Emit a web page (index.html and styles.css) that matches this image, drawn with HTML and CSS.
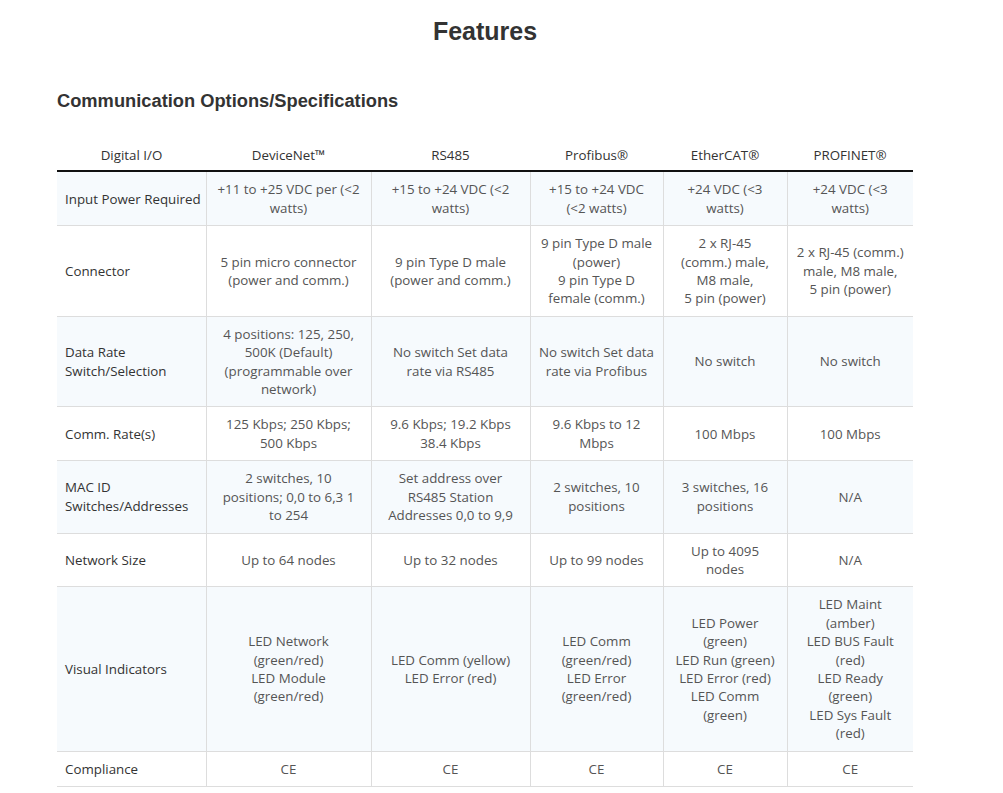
FILE: index.html
```html
<!DOCTYPE html>
<html>
<head>
<meta charset="utf-8">
<link rel="stylesheet" href="styles.css">
</head>
<body>
<div class="page">
  <h1 class="title">Features</h1>
  <h2 class="subtitle">Communication Options/Specifications</h2>
  <table class="spec">
    <colgroup>
      <col style="width:149px"><col style="width:165px"><col style="width:159px"><col style="width:133px"><col style="width:124px"><col style="width:126px">
    </colgroup>
    <thead>
      <tr><th>Digital I/O</th><th>DeviceNet™</th><th>RS485</th><th>Profibus®</th><th>EtherCAT®</th><th>PROFINET®</th></tr>
    </thead>
    <tbody>
      <tr class="alt"><td class="lbl">Input Power Required</td><td>+11 to +25 VDC per (&lt;2 watts)</td><td>+15 to +24 VDC (&lt;2 watts)</td><td>+15 to +24 VDC<br>(&lt;2 watts)</td><td>+24 VDC (&lt;3 watts)</td><td>+24 VDC (&lt;3 watts)</td></tr>
      <tr><td class="lbl">Connector</td><td>5 pin micro connector (power and comm.)</td><td>9 pin Type D male (power and comm.)</td><td>9 pin Type D male (power)<br>9 pin Type D female (comm.)</td><td>2 x RJ-45<br>(comm.) male,<br>M8 male,<br>5 pin (power)</td><td>2 x RJ-45 (comm.) male, M8 male,<br>5 pin (power)</td></tr>
      <tr class="alt"><td class="lbl">Data Rate Switch/Selection</td><td>4 positions: 125, 250, 500K (Default) (programmable over network)</td><td>No switch Set data rate via RS485</td><td>No switch Set data rate via Profibus</td><td>No switch</td><td>No switch</td></tr>
      <tr><td class="lbl">Comm. Rate(s)</td><td>125 Kbps; 250 Kbps;<br>500 Kbps</td><td>9.6 Kbps; 19.2 Kbps 38.4 Kbps</td><td>9.6 Kbps to 12 Mbps</td><td>100 Mbps</td><td>100 Mbps</td></tr>
      <tr class="alt"><td class="lbl">MAC ID Switches/Addresses</td><td>2 switches, 10<br>positions; 0,0 to 6,3 1<br>to 254</td><td>Set address over<br>RS485 Station Addresses 0,0 to 9,9</td><td>2 switches, 10 positions</td><td>3 switches, 16 positions</td><td>N/A</td></tr>
      <tr><td class="lbl">Network Size</td><td>Up to 64 nodes</td><td>Up to 32 nodes</td><td>Up to 99 nodes</td><td>Up to 4095<br>nodes</td><td>N/A</td></tr>
      <tr class="alt"><td class="lbl">Visual Indicators</td><td>LED Network<br>(green/red)<br>LED Module<br>(green/red)</td><td>LED Comm (yellow)<br>LED Error (red)</td><td>LED Comm (green/red)<br>LED Error (green/red)</td><td>LED Power (green)<br>LED Run (green)<br>LED Error (red)<br>LED Comm (green)</td><td>LED Maint (amber)<br>LED BUS Fault (red)<br>LED Ready (green)<br>LED Sys Fault (red)</td></tr>
      <tr><td class="lbl">Compliance</td><td>CE</td><td>CE</td><td>CE</td><td>CE</td><td>CE</td></tr>
    </tbody>
  </table>
</div>
</body>
</html>
```
FILE: styles.css
```css
html, body {
  margin: 0;
  padding: 0;
  background: #fff;
}
.page {
  width: 856px;
  margin-left: 57px;
  padding-top: 16px;
}
.title {
  margin: 0;
  text-align: center;
  font-family: "Liberation Sans", Arial, sans-serif;
  font-weight: 700;
  font-size: 25px;
  line-height: 30px;
  color: #333;
}
.subtitle {
  margin: 44px 0 0 0;
  font-family: "Liberation Sans", Arial, sans-serif;
  font-weight: 700;
  font-size: 18.3px;
  line-height: 22px;
  color: #333;
}
.spec {
  margin-top: 28px;
  width: 856px;
  border-collapse: collapse;
  table-layout: fixed;
  font-family: "Open Sans", sans-serif;
  font-size: 13.33px;
  line-height: 18.4px;
  color: #555;
}
.spec th {
  font-weight: 500;
  color: #333;
  padding: 6px 8px 6px;
  text-align: center;
  border-bottom: 2px solid #111;
}
.spec td {
  padding: 8px 8px;
  text-align: center;
  vertical-align: middle;
  border-bottom: 1px solid #ddd;
  border-left: 1px solid #ddd;
}
.spec td:first-child {
  border-left: none;
}
.spec td.lbl {
  text-align: left;
  padding-right: 4px;
  font-weight: 500;
  color: #333;
}
.spec tr.alt td {
  background: #f6fafd;
}
```
